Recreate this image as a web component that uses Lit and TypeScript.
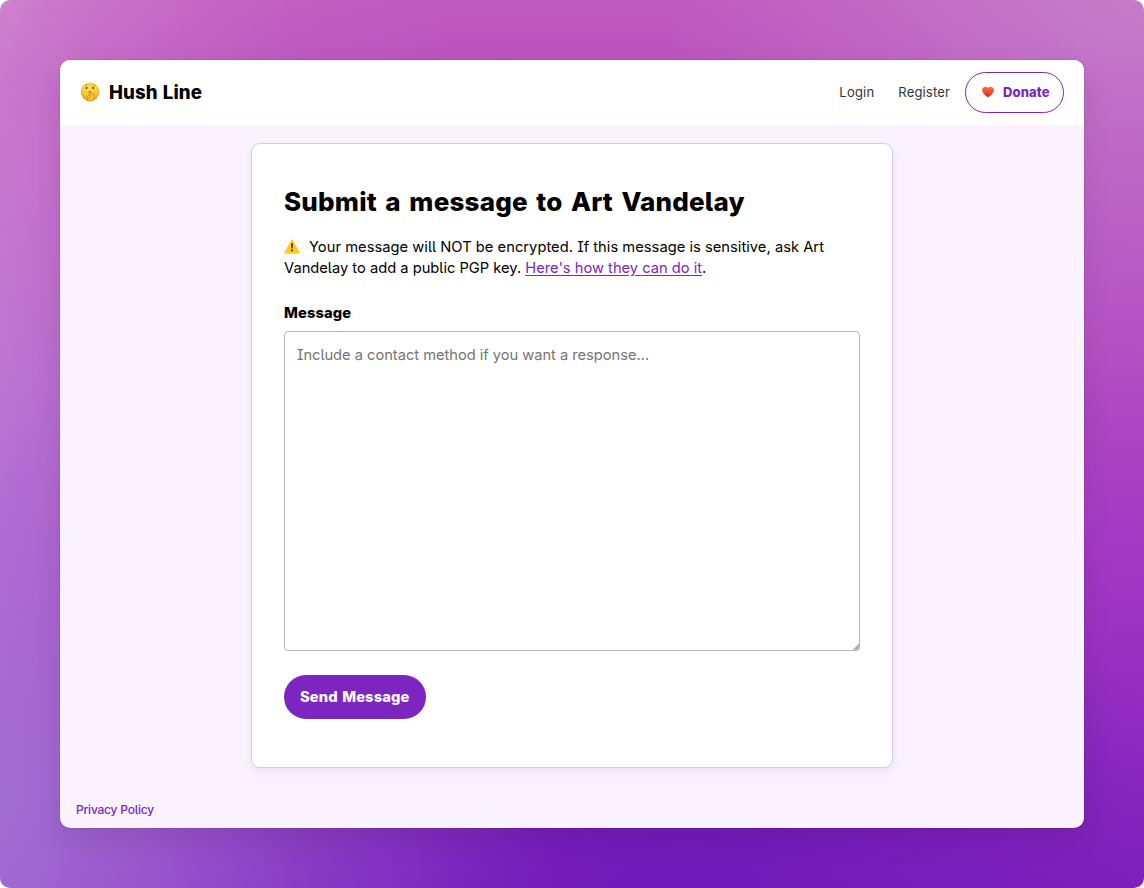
import { LitElement, html, css } from "lit";
import { customElement } from "lit/decorators.js";

@customElement("app-root")
class AppRoot extends LitElement {
  static styles = css`
    :host {
      display: block;
      font-family: Inter, "Liberation Sans", sans-serif;
      font-feature-settings: "cv05", "cv08";
      color: #000;
    }
    * { box-sizing: border-box; }
    .desktop {
      height: 888px;
      padding: 60px;
      border-radius: 10px;
      background:
        radial-gradient(ellipse 560px 620px at 0% 90%, rgba(160, 116, 212, .72), rgba(160, 116, 212, .4) 35%, rgba(160, 116, 212, 0)),
        linear-gradient(90deg, rgba(255, 255, 255, .24), rgba(255, 255, 255, .15) 8%, rgba(255, 255, 255, .03) 26%, rgba(255, 255, 255, 0) 40%),
        radial-gradient(ellipse 480px 400px at 100% 0%, rgba(204, 155, 210, .55), rgba(204, 155, 210, 0)),
        radial-gradient(ellipse 560px 340px at 60% 100%, #701bb9 10%, rgba(112, 27, 185, 0)),
        linear-gradient(180deg, #bf5abe, #b850be 10%, #b04bc2 42%, #a239c3 62%, #8e2abf 85%, #8222bd);
    }
    .window {
      height: 768px;
      display: flex;
      flex-direction: column;
      border-radius: 10px;
      background: #faf3ff;
      box-shadow: 0 0 1px rgba(0, 0, 0, .5), 0 12px 28px rgba(0, 0, 0, .09);
      overflow: hidden;
    }
    header {
      height: 65px;
      padding: 0 20px;
      display: flex;
      align-items: center;
      justify-content: space-between;
      background: #fff;
    }
    .brand { display: flex; align-items: center; gap: 9px; font-size: 18.6px; font-weight: 800; }
    .brand svg { width: 20px; height: 20px; margin-top: -1px; }
    .brand-name { margin-top: -1px; letter-spacing: .1px; word-spacing: 1px; }
    nav { display: flex; align-items: center; font-size: 13px; color: #333; }
    .login, .register, .donate-text { margin-top: -1px; }
    .login { letter-spacing: .2px; }
    .register { margin-left: 24px; margin-right: 15px; letter-spacing: .17px; }
    .donate {
      width: 99px;
      height: 41px;
      display: flex;
      align-items: center;
      padding-left: 15px;
      border: 1px solid #7d25c1;
      border-radius: 21px;
      color: #7d25c1;
      font-weight: 850;
    }
    .donate-text { letter-spacing: .1px; }
    .donate svg { width: 14px; height: 12px; margin: -1px 8px 0 0; }
    .card {
      width: 642px;
      height: 625px;
      margin: 18px auto 0;
      padding: 0 32px;
      border: 1px solid #d7cedd;
      border-radius: 9px;
      background: #fff;
      box-shadow: 0 4px 8px rgba(70, 20, 100, .08);
    }
    h1 { margin: 41px 0 0; font-size: 26px; line-height: 34px; font-weight: 850; letter-spacing: .2px; word-spacing: 2.6px; white-space: nowrap; }
    .warning { margin: 18px 0 0; font-size: 14.7px; line-height: 21px; letter-spacing: .03px; white-space: nowrap; }
    .row { display: block; }
    .line2 { letter-spacing: 0; }
    .warning svg { width: 16px; height: 15px; margin-right: 9px; vertical-align: -2px; }
    .link { color: #7d25c1; text-decoration: underline; text-underline-offset: 2px; }
    label { display: block; margin-top: 24px; font-size: 14.7px; line-height: 21px; font-weight: 850; letter-spacing: .1px; }
    textarea {
      display: block;
      width: 576px;
      height: 320px;
      margin-top: 7px;
      padding: 13px 12px;
      border: 1px solid #b8b8b8;
      border-radius: 4px;
      font: inherit;
      font-size: 14.7px;
      line-height: 20px;
      letter-spacing: -.03px;
      font-feature-settings: inherit;
      resize: vertical;
      outline: none;
    }
    textarea::placeholder { color: #757575; }
    textarea::-webkit-resizer {
      background: linear-gradient(135deg, transparent 78%, #b4b4b4 78%);
    }
    .send {
      display: block;
      width: 141.5px;
      height: 44px;
      margin-top: 24px;
      padding: 0;
      border: 0;
      border-radius: 22px;
      background: #7d25c1;
      color: #fff;
      font: inherit;
      font-feature-settings: inherit;
      font-size: 14.7px;
      font-weight: 850;
      letter-spacing: .15px;
      word-spacing: 1px;
    }
    footer { margin: auto 0 0; padding: 0 16px 10px; font-size: 12px; line-height: 17px; letter-spacing: -.21px; color: #7d25c1; font-weight: 500; }
  `;

  render() {
    return html`
      <div class="desktop">
        <div class="window">
          <header>
            <div class="brand">
              <svg viewBox="0 0 20 20">
                <defs>
                  <radialGradient id="face" cx=".5" cy=".35" r=".65">
                    <stop offset="0" stop-color="#ffe25c" />
                    <stop offset=".65" stop-color="#fdc431" />
                    <stop offset="1" stop-color="#e98a17" />
                  </radialGradient>
                </defs>
                <circle cx="10" cy="9.8" r="9.3" fill="url(#face)" />
                <path d="M4.8 3.8q1-1 2.4-.8M12.8 3q1.4-.2 2.4.8" fill="none" stroke="#b8791c" stroke-width=".6" />
                <ellipse cx="6.6" cy="6" rx=".9" ry="1.1" fill="#5b340c" />
                <ellipse cx="13.2" cy="6" rx=".9" ry="1.1" fill="#5b340c" />
                <path d="M7.8 10.4q2.2-1.2 4.2 0" fill="none" stroke="#a75f11" stroke-width=".8" />
                <path d="M9.4 9.3q.8-.8 1.3.2l.2 4.2 2.4-2q1.4-.4 1 1l-.6 3.9q-1 2.6-3.7 2.6-3-.2-3-3l.5-2.2q1-1.2 1.8-.2z" fill="#ffc83a" stroke="#d77c14" stroke-width=".7" />
                <path d="M7.9 15.8l2.8-1.2m-2.6 2.8l3-1.1" stroke="#d77c14" stroke-width=".6" />
              </svg>
              <span class="brand-name">Hush Line</span>
            </div>
            <nav>
              <span class="login">Login</span>
              <span class="register">Register</span>
              <span class="donate">
                <svg viewBox="0 0 14 12">
                  <defs>
                    <linearGradient id="heart" x1="0" y1="0" x2="0" y2="1">
                      <stop offset="0" stop-color="#ff6a50" />
                      <stop offset="1" stop-color="#dc2418" />
                    </linearGradient>
                  </defs>
                  <path d="M7 11.6C4.6 9.8 1.2 7 1.2 3.8 1.2.7 5.3-.3 7 2.1 8.7-.3 12.8.7 12.8 3.8c0 3.2-3.4 6-5.8 7.8z" fill="url(#heart)" />
                </svg>
                <span class="donate-text">Donate</span>
              </span>
            </nav>
          </header>
          <main class="card">
            <h1>Submit a message to Art Vandelay</h1>
            <p class="warning">
              <span class="row"><svg viewBox="0 0 16 15"><path d="M8 1.2 15.1 14H.9z" fill="#ffcb16" stroke="#ffcb16" stroke-width="1.4" stroke-linejoin="round" /><path d="M7 4.2h2l-.4 5.3H7.4z" fill="#333" /><circle cx="8" cy="11.6" r="1" fill="#333" /></svg>Your message will NOT be encrypted. If this message is sensitive, ask Art</span>
              <span class="row line2">Vandelay to add a public PGP key. <span class="link">Here's how they can do it</span>.</span>
            </p>
            <label>Message</label>
            <textarea placeholder="Include a contact method if you want a response…"></textarea>
            <button class="send">Send Message</button>
          </main>
          <footer>Privacy Policy</footer>
        </div>
      </div>
    `;
  }
}
